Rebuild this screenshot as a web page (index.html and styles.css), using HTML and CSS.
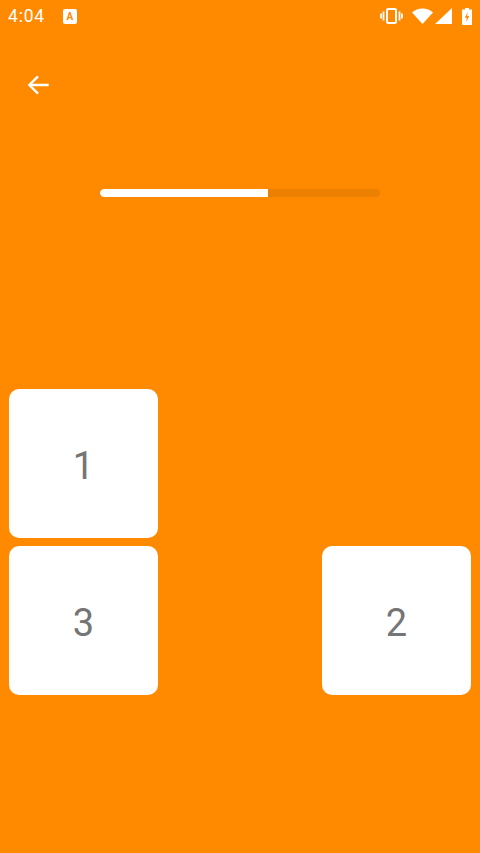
FILE: index.html
```html
<!DOCTYPE html>
<html lang="en">
<head>
    <meta charset="UTF-8">
    <meta name="viewport" content="width=device-width, initial-scale=1.0">
    <title>Puzzle</title>
    <link rel="stylesheet" href="styles.css">
</head>
<body>
    <div id="screen">
        <!-- Status bar -->
        <div class="status-bar">
            <div class="status-left">
                <span class="clock">4:04</span>
                <span class="notif">A</span>
            </div>
            <div class="status-right">
                <svg class="vibrate" width="23" height="16" viewBox="0 0 23 16">
                    <rect x="7" y="1" width="9" height="14" rx="1" fill="none" stroke="#fff" stroke-width="2"/>
                    <path d="M3.500 3.500v9M1 5.500v5M19.500 3.500v9M22 5.500v5" stroke="#fff" stroke-width="1.800" fill="none"/>
                </svg>
                <svg class="wifi" width="21" height="16" viewBox="0 0 21 16">
                    <path d="M0 4.500C3 1.800 6.500 0.500 10.500 0.500s7.500 1.300 10.500 4L10.500 16z" fill="#fff"/>
                </svg>
                <svg class="signal" width="17" height="16" viewBox="0 0 17 16">
                    <path d="M0 16L17 0v16z" fill="#fff"/>
                </svg>
                <svg class="battery" width="10" height="17" viewBox="0 0 10 17">
                    <path d="M3 0h4v1.500h3V17H0V1.500h3z" fill="#fff"/>
                    <path d="M5.800 4L2.800 9.800h2L4.200 14l3.100-6H5.200z" fill="#ff8a00"/>
                </svg>
            </div>
        </div>

        <!-- Back arrow -->
        <div class="toolbar">
            <svg width="32" height="32" viewBox="0 0 24 24">
                <path d="M20 12H5.500M12 5.500L5.500 12l6.500 6.500" fill="none" stroke="#fff" stroke-width="1.800"/>
            </svg>
        </div>

        <!-- Progress -->
        <div class="progress">
            <div class="progress-fill" style="width: 60%"></div>
        </div>

        <!-- Tiles -->
        <div class="board">
            <div class="tile">1</div>
            <div class="empty"></div>
            <div class="empty"></div>
            <div class="tile">3</div>
            <div class="empty"></div>
            <div class="tile">2</div>
            <div class="empty"></div>
            <div class="empty"></div>
            <div class="empty"></div>
        </div>
    </div>
</body>
</html>
```

FILE: styles.css
```css
html, body {
    margin: 0;
    padding: 0;
}
#screen {
    width: 480px;
    height: 853px;
    background: #ff8a00;
    display: flex;
    flex-direction: column;
    overflow: hidden;
    font-family: Roboto, "Liberation Sans", sans-serif;
}
.status-bar {
    height: 32px;
    padding: 0 8px;
    display: flex;
    justify-content: space-between;
    align-items: center;
    box-sizing: border-box;
    flex-shrink: 0;
}
.status-left {
    display: flex;
    align-items: center;
    gap: 18px;
    color: #fff;
}
.clock {
    font-size: 17.500px;
    letter-spacing: 0.8px;
}
.notif {
    width: 14px;
    height: 15px;
    background: #fff;
    color: #ff8a00;
    border-radius: 2px;
    font-size: 10px;
    font-weight: 700;
    line-height: 15px;
    text-align: center;
}
.status-right {
    display: flex;
    align-items: center;
}
.wifi {
    margin-left: 9px;
}
.signal {
    margin-left: 2px;
}
.battery {
    margin-left: 10px;
}
.toolbar {
    height: 32px;
    padding: 37px 0 0 22px;
    flex-shrink: 0;
}
.progress {
    width: 280px;
    height: 8px;
    margin: 88px 0 0 100px;
    background: #ec8002;
    border-radius: 4px;
    flex-shrink: 0;
    overflow: hidden;
}
.progress-fill {
    height: 100%;
    background: #fff;
    border-radius: 4px 0 0 4px;
}
.board {
    margin-top: 192px;
    padding: 0 9px;
    display: grid;
    grid-template-columns: repeat(3, 149px);
    grid-template-rows: repeat(3, 149px);
    column-gap: 7.5px;
    row-gap: 7.5px;
}
.tile {
    background: #fff;
    border-radius: 10px;
    color: #757575;
    font-size: 38px;
    padding-top: 5px;
    box-sizing: border-box;
    display: flex;
    align-items: center;
    justify-content: center;
}
```
